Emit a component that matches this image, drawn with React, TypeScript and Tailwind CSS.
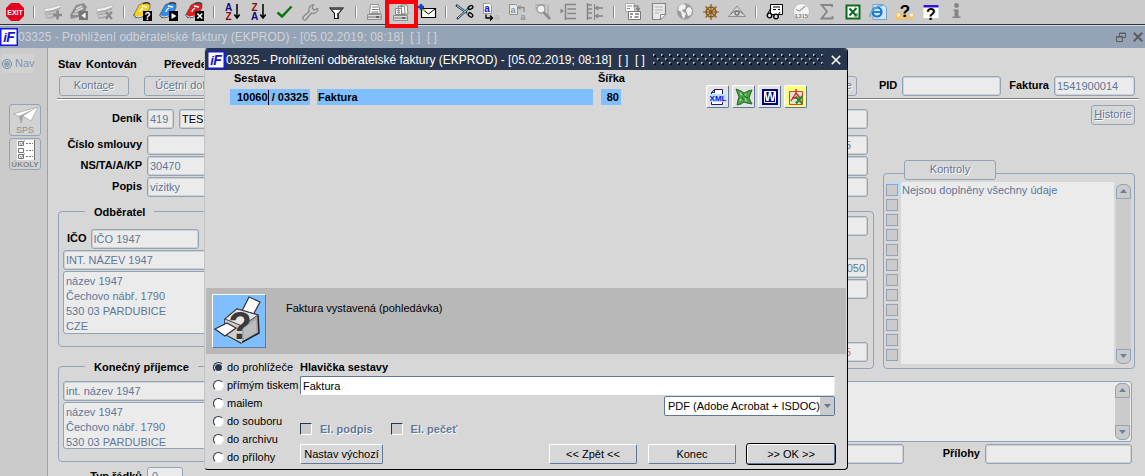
import React from "react";

type IconProps = { children: React.ReactNode };

const Ico = ({ children }: IconProps) => (
  <svg viewBox="0 0 22 22" className="block size-[22px]" fill="none" aria-hidden="true">
    {children}
  </svg>
);

const GREY = "#8f8f8f";
const NAVY = "#0a0a84";

type GlyphProps = { x: number; y: number; size: number; color: string; className?: string; children: string };
const Glyph = ({ x, y, size, color, className = "font-bold", children }: GlyphProps) => (
  <text x={x} y={y} fontSize={size} fill={color} textAnchor="middle" className={className}>
    {children}
  </text>
);

const ExitIcon = () => (
  <Ico>
    <path d="M7 2h8l5 5v8l-5 5H7l-5-5V7z" fill="#e2001e" />
    <Glyph x={11} y={13.5} size={7} color="#fff">EXIT</Glyph>
  </Ico>
);

const SheetBase = () => (
  <>
    <path d="M2 7.500c5 0 9-1 16-3.500l1 2c-6 3-11 4.500-16 4.500z" fill="#f4f4f4" stroke="#b5b5b5" strokeWidth="0.800" />
    <path d="M4 11c5 0 9-1 14-3.500M5 13.500c5 0 8-.8 12-3M5 17c4-.2 7-1 9-2" stroke="#a8a8a8" strokeWidth="1.400" />
    <path d="M3 10.500l2 7" stroke="#b5b5b5" strokeWidth="1.500" />
  </>
);
const SheetAddIcon = () => (
  <Ico>
    <SheetBase />
    <path d="M15.500 9.500v9M11 14h9" stroke="#8a8a8a" strokeWidth="2.600" />
  </Ico>
);
const SheetBackIcon = () => (
  <Ico>
    <path d="M2 14 8 4l8-2 3 4-2 5-6 5-8 2z" fill="#8f8f8f" />
    <path d="M8 8l6-3M7 11l8-4M5 13h5" stroke="#d9d9d9" strokeWidth="1.500" />
    <path d="M11 10h9v9h-9z" fill="#777" />
    <path d="M17.500 11.500v6l-4-3z" fill="#fff" />
  </Ico>
);
const SheetDeleteIcon = () => (
  <Ico>
    <SheetBase />
    <path d="M12 11l6 7M18 11l-6 7" stroke="#8a8a8a" strokeWidth="2" />
  </Ico>
);

const Binder = ({ color, children }: { color: string; children: React.ReactNode }) => (
  <Ico>
    <path d="M2 13.500 7 4l4-2 7 1v4l-5 8-7 2z" fill={color} stroke="#4b4b4b" strokeWidth="0.600" />
    <path d="M1.500 13.500l2.500 3 7-1" stroke="#555" strokeWidth="1.200" />
    <path d="M2.500 14.500l3 1.500 5-1" stroke="#fff" strokeWidth="0.800" />
    <path d="M8 11c0-2 1-3 3-4M10 5l5 1" stroke="#fff" strokeWidth="1.300" />
    <path d="M11 3c2-1.500 5-1.500 7 0" stroke="#333" strokeWidth="1.300" />
    <path d="M11 10h9v10h-9z" fill="#000" />
    {children}
  </Ico>
);
const BinderQuery = () => (
  <Binder color="#f7cf1c">
    <Glyph x={15.5} y={18.5} size={10} color="#fff">?</Glyph>
  </Binder>
);
const BinderRun = () => (
  <Binder color="#2f8cec">
    <path d="M13.500 12v6l5-3z" fill="#fff" />
  </Binder>
);
const BinderCancel = () => (
  <Binder color="#e02020">
    <path d="M13.300 12.500l5 5M18.300 12.500l-5 5" stroke="#fff" strokeWidth="1.600" />
  </Binder>
);

const SortIcon = ({ desc = false }: { desc?: boolean }) => (
  <Ico>
    <Glyph x={6.5} y={desc ? 18.5 : 10} size={10} color={NAVY}>A</Glyph>
    <Glyph x={6.5} y={desc ? 10 : 18.5} size={10} color="#8a1010">Z</Glyph>
    <path d="M15 3v14M12.300 13.500 15 17l2.700-3.500" stroke="#000" strokeWidth="1.500" />
  </Ico>
);

const CheckIcon = () => (
  <Ico>
    <path d="M3.500 11.500 8 15.500 17.500 5.500" stroke="#107010" strokeWidth="2.400" />
  </Ico>
);
const WrenchIcon = () => (
  <Ico>
    <path d="M3.500 18.500c-1-1-1-2 0-3l5.500-5c-1-3 1-6.500 4-7l.5.500-1.500 3 2 2 3.500-1.500.5.500c-.5 3.500-3.500 5-6.500 4l-5.500 6.500c-1 1-1.700 1-2.500 0z" stroke="#858585" strokeWidth="1.200" />
  </Ico>
);
const FunnelIcon = () => (
  <Ico>
    <path d="M4 7h13L12.500 12.500v5h-4v-5z" fill="#fff" stroke="#111" strokeWidth="1.100" />
    <path d="M4 6.500h13l-1.500 2.500h-10z" fill="#555" />
    <path d="M11 12h1.500v5H11z" fill="#555" />
  </Ico>
);
const PrinterIcon = () => (
  <Ico>
    <path d="M6.500 3.500h8l2 9h-11z" fill="#fff" stroke={GREY} />
    <path d="M8 6h6M8 8.500h6.500M7.500 11h7" stroke="#777" />
    <path d="M3.500 13.500h14v5h-14z" fill="#ddd" stroke={GREY} />
    <path d="M4 16h13" stroke="#777" />
    <path d="M12 15h3v2h-3z" fill="#666" />
  </Ico>
);
const PrintersIcon = () => (
  <Ico>
    <path d="M11 4h6l1 9h-6zM8.500 5.500h6l.5 8H9zM5.500 7.500h6v6h-6z" fill="#fff" stroke="#858585" />
    <path d="M7 9.500h3M7 11.500h3" stroke={GREY} />
    <path d="M3.500 14.500h14v5h-14z" fill="#ddd" stroke={GREY} />
    <path d="M4 17h13" stroke="#777" />
    <path d="M12 16h3v2h-3z" fill="#666" />
  </Ico>
);
const MailIcon = () => (
  <Ico>
    <path d="M5.500 7.500h14v9h-14z" fill="#fff" stroke="#000" strokeWidth="1.200" />
    <path d="M6 8l6.500 5 6.500-5" stroke="#000" />
    <path d="M6 9h4" stroke="#e7c32d" strokeWidth="1.500" />
    <path d="M5 3v6M2 6h6" stroke="#0747c9" strokeWidth="2.600" />
  </Ico>
);
const CutIcon = () => (
  <Ico>
    <path d="M2 4l11 8M3 18 15 7" stroke="#245" strokeWidth="2.200" />
    <path d="M3 4.700l9 6.500M4 17 14 8" stroke="#cfe7e7" strokeWidth="0.800" />
    <ellipse cx="16.500" cy="6.500" rx="2.500" ry="1.700" stroke="#111" strokeWidth="1.400" transform="rotate(-30 16.500 6.500)" />
    <ellipse cx="16.500" cy="14" rx="2.500" ry="1.700" stroke="#111" strokeWidth="1.400" transform="rotate(40 16.500 14)" />
  </Ico>
);
const CopyIcon = () => (
  <Ico>
    <path d="M3.500 2.500h6l2 2v8h-8z" fill="#fff" stroke="#999" />
    <Glyph x={7} y={11} size={10} color="#1212d8">a</Glyph>
    <path d="M6 13.500V17h6M10 14.500l2.500 2.500L10 19.500" stroke="#000" strokeWidth="1.300" />
    <Glyph x={17} y={18.5} size={9} color="#b5b5b5">a</Glyph>
  </Ico>
);
const PasteIcon = () => (
  <Ico>
    <path d="M3.500 3.500h6l2 2v8h-8z" fill="#e9e9e9" stroke={GREY} />
    <Glyph x={7} y={12} size={9} color={GREY}>a</Glyph>
    <path d="M18 11V6.500h-5M14.500 4.500 12.500 6.500l2 2" stroke={GREY} strokeWidth="1.300" />
    <Glyph x={17} y={18.5} size={9} color={GREY}>a</Glyph>
  </Ico>
);
const FindIcon = () => (
  <Ico>
    <path d="M3 4h11M3 7h4M16 4v10l2 4" stroke="#b5b5b5" strokeWidth="2" />
    <circle cx="9" cy="8" r="4" fill="#f1f1f1" stroke="#999" strokeWidth="1.300" />
    <path d="M11.500 11 18 18" stroke={GREY} strokeWidth="2.600" />
  </Ico>
);
const IndentIcon = () => (
  <Ico>
    <path d="M7 3.500h11M9.500 8h8.500M9.500 12.500h8.500M7 17.500h11M7.500 3v16" stroke="#858585" strokeWidth="1.500" />
    <path d="M2.500 7.500v5l3.500-2.500z" fill="#858585" />
  </Ico>
);
const TreeIcon = () => (
  <Ico>
    <path d="M3.500 2v17M3 4h5M3 8h5M3 12h5M3 17h5M11 7h8M11 15h8" stroke="#858585" strokeWidth="1.500" />
    <path d="M10.500 3v16M14 5l-3 2 3 2zM14 13l-3 2 3 2z" stroke="#858585" />
  </Ico>
);
const FormsIcon = () => (
  <Ico>
    <path d="M3.500 2.500h9v8h-9z" fill="#fff" stroke="#aaa" />
    <path d="M5 5h5M5 7.500h3" stroke="#888" />
    <path d="M6.500 10.500h12v8h-12z" fill="#fff" stroke="#777" />
    <path d="M8 13h3M13 13h4M8 16h2M12.500 16h4" stroke="#777" strokeWidth="1.500" />
    <path d="M11 5h5v4M14 7l2 2.500L18 7" stroke="#777" strokeWidth="1.200" />
  </Ico>
);
const NoteIcon = () => (
  <Ico>
    <path d="M4.500 2.500h13v11l-5 5h-8z" fill="#e8e8e8" stroke="#858585" strokeWidth="1.200" />
    <path d="M12.500 18v-4.500h5" fill="#fff" stroke="#858585" />
    <path d="M7 6h8M7 9h8M7 12h4" stroke="#b0b0b0" />
  </Ico>
);
const GlobeIcon = () => (
  <Ico>
    <circle cx="11" cy="10.500" r="7.800" fill="#9a9a9a" stroke="#a5a5a5" />
    <path d="M5 6c1-2 3-3 5-3l2 2-1 3-3 1 1 2 3 1-1 3-1 3-2-3-1-4-3-2zM13 7l3-1 2 3-1 5-3 1-1-3-1-2z" fill="#f1f1f1" />
  </Ico>
);
const HelmIcon = () => (
  <Ico>
    <circle cx="11" cy="11" r="4.800" stroke="#8a5a14" strokeWidth="1.800" />
    <circle cx="11" cy="11" r="1.500" fill="#8a5a14" />
    <path d="M11 3v16M3 11h16M5.500 5.500l11 11M16.500 5.500l-11 11" stroke="#8a5a14" strokeWidth="1.200" />
  </Ico>
);
const EyeIcon = () => (
  <Ico>
    <path d="M2.500 15.500 11 5l8.500 10.500z" stroke={GREY} fill="#d2d2d2" />
    <path d="M5 13c3-4 9-4 12 0" stroke="#777" />
    <circle cx="11" cy="12" r="2" stroke="#777" strokeWidth="1.300" />
  </Ico>
);
const GlassesIcon = () => (
  <Ico>
    <path d="M6.500 3.500h12v10h-12z" fill="#fff" stroke="#000" />
    <path d="M9 6h7M9 8.500h3M14 8.500h2" stroke="#000" />
    <circle cx="5.500" cy="14.500" r="2.300" fill="#d6d6d6" stroke="#000" strokeWidth="1.300" />
    <circle cx="12" cy="15.500" r="2.300" fill="#d6d6d6" stroke="#000" strokeWidth="1.300" />
    <path d="M4 12l3-5M14 14l2-3" stroke="#000" />
  </Ico>
);
const ClockIcon = () => (
  <Ico>
    <circle cx="11.500" cy="10.500" r="8" fill="#f3f3f3" stroke="#bdbdbd" />
    <path d="M6 8.500 9.500 10 15.500 5" stroke="#a0a0a0" strokeWidth="1.300" />
    <Glyph x={11.5} y={16.5} size={6} color="#808080">1315</Glyph>
  </Ico>
);
const SumIcon = () => (
  <Ico>
    <path d="M16 6V4H5.500l5.500 6.500L5.500 17.500H16.500V15" stroke="#858585" strokeWidth="1.800" />
  </Ico>
);
const ExcelIcon = () => (
  <Ico>
    <path d="M4.500 4.500h13v13h-13z" fill="#fff" stroke="#0c6b20" strokeWidth="2" />
    <path d="M7.500 7.500l6.500 7M14.500 7 7.500 14.500" stroke="#0c6b20" strokeWidth="2" />
    <path d="M12 15h3.500M15 12v3" stroke="#0c6b20" />
  </Ico>
);
const BrowserIcon = () => (
  <Ico>
    <path d="M5 3.500h10l3.500 3v12H5z" fill="#cfe4f7" stroke="#7ba3c9" />
    <circle cx="9" cy="11" r="4.500" stroke="#1b74c9" strokeWidth="2.200" />
    <path d="M5 11h9" stroke="#1b74c9" strokeWidth="1.800" />
    <path d="M1.500 16C3 9 9 4 15 4.500" stroke="#57a9e8" strokeWidth="1.400" />
  </Ico>
);
const HelpTeamIcon = () => (
  <Ico>
    <path d="M2 12h5v7H2zM8.500 13h5v6h-5zM15 12h5v7h-5z" fill="#f5c06a" />
    <circle cx="4.500" cy="14" r="1.700" fill="#fff0c8" />
    <circle cx="17.500" cy="14" r="1.700" fill="#fff0c8" />
    <Glyph x={11} y={15.5} size={17} color="#000">?</Glyph>
  </Ico>
);
const HelpWindowIcon = () => (
  <Ico>
    <path d="M3.500 4h15v13h-15z" fill="#fff" />
    <path d="M3.500 4h15v2.500h-15z" fill="#3512e0" />
    <Glyph x={11} y={18.5} size={16} color="#000">?</Glyph>
  </Ico>
);
const InfoIcon = () => (
  <Ico>
    <circle cx="10.500" cy="4.500" r="2.400" fill="#858585" />
    <path d="M7.500 8.500h5v7h2V17H6.500v-1.500h2V10h-1z" fill="#858585" />
  </Ico>
);

type Tool = { name: string; icon: React.ReactNode; highlight?: boolean };
const toolGroups: Tool[][] = [
  [{ name: "Konec", icon: <ExitIcon /> }],
  [
    { name: "Nový", icon: <SheetAddIcon /> },
    { name: "Zpět", icon: <SheetBackIcon /> },
    { name: "Smazat", icon: <SheetDeleteIcon /> },
  ],
  [
    { name: "Dotaz", icon: <BinderQuery /> },
    { name: "Provést dotaz", icon: <BinderRun /> },
    { name: "Zrušit dotaz", icon: <BinderCancel /> },
  ],
  [
    { name: "Seřadit vzestupně", icon: <SortIcon /> },
    { name: "Seřadit sestupně", icon: <SortIcon desc /> },
    { name: "Potvrdit", icon: <CheckIcon /> },
    { name: "Nástroje", icon: <WrenchIcon /> },
    { name: "Filtr", icon: <FunnelIcon /> },
  ],
  [
    { name: "Tisk", icon: <PrinterIcon /> },
    { name: "Tisk sestav", icon: <PrintersIcon />, highlight: true },
    { name: "Pošta", icon: <MailIcon /> },
  ],
  [
    { name: "Vyjmout", icon: <CutIcon /> },
    { name: "Kopírovat", icon: <CopyIcon /> },
    { name: "Vložit", icon: <PasteIcon /> },
    { name: "Hledat", icon: <FindIcon /> },
    { name: "Odsadit", icon: <IndentIcon /> },
    { name: "Strom", icon: <TreeIcon /> },
  ],
  [
    { name: "Formuláře", icon: <FormsIcon /> },
    { name: "Poznámka", icon: <NoteIcon /> },
    { name: "Web", icon: <GlobeIcon /> },
    { name: "Navigace", icon: <HelmIcon /> },
    { name: "Náhled", icon: <EyeIcon /> },
  ],
  [
    { name: "Zobrazit", icon: <GlassesIcon /> },
    { name: "Čas", icon: <ClockIcon /> },
    { name: "Součet", icon: <SumIcon /> },
    { name: "Excel", icon: <ExcelIcon /> },
    { name: "Prohlížeč", icon: <BrowserIcon /> },
    { name: "Podpora", icon: <HelpTeamIcon /> },
    { name: "Nápověda", icon: <HelpWindowIcon /> },
    { name: "Informace", icon: <InfoIcon /> },
  ],
];

const Toolbar = () => (
  <header className="flex h-[25px] shrink-0 items-start border-b border-[#28364d] bg-[#cbcbcb] pl-0.5">
    {toolGroups.map((group, i) => (
      <React.Fragment key={i}>
        {i > 0 && (
          <span className="flex h-6 w-3 items-center justify-center">
            <span className="h-3 w-0.5 border-r border-white bg-[#7b8ca6]" />
          </span>
        )}
        {group.map((tool) => (
          <button key={tool.name} aria-label={tool.name} className="relative flex h-6 w-[26px] items-center justify-center">
            {tool.icon}
            {tool.highlight && <span className="absolute -left-[3px] top-0 z-20 h-7 w-[33px] border-4 border-[#fb0007]" />}
          </button>
        ))}
      </React.Fragment>
    ))}
  </header>
);

const Logo = () => (
  <svg viewBox="0 0 18 18" className="size-[18px] shrink-0" aria-hidden="true">
    <path d="M0 0h18v18H0z" fill="#1717e6" />
    <path d="M1.500 1.500h15v15h-15z" fill="#fff" />
    <Glyph x={5} y={14} size={13} color="#1414c8" className="font-bold italic">i</Glyph>
    <Glyph x={10.5} y={14} size={14} color="#1414c8" className="font-bold italic">F</Glyph>
  </svg>
);

const Field = ({ label, value = "", className = "" }: { label: string; value?: string; className?: string }) => (
  <input
    aria-label={label}
    readOnly
    defaultValue={value}
    className={`h-5 min-w-0 rounded-[3px] border border-[#95a3b7] px-0.5 shadow-[inset_0_0_0_1px_#d0d0d0] outline-none ${className}`}
  />
);
const DIM = "bg-[#ebebeb] text-[#5f7799]";

const LabelledRow = ({ label, children }: { label: string; children: React.ReactNode }) => (
  <div className="flex items-center gap-[5px]">
    <span className="w-[84px] shrink-0 text-right font-bold">{label}</span>
    {children}
  </div>
);

const DimButton = ({ children, className }: { children: React.ReactNode; className: string }) => (
  <button className={`h-5 whitespace-nowrap rounded-[3px] border border-[#95a3b7] bg-[#d7d7d7] text-[#5f7799] [text-shadow:1px_1px_0_#fff] ${className}`}>
    {children}
  </button>
);

const Party = ({ title, children, className }: { title: string; children: React.ReactNode; className: string }) => (
  <fieldset className={`flex min-w-0 flex-col rounded-[4px] border border-[#95a3b7] px-1 pb-3 ${className}`}>
    <legend className="ml-[22px] h-4 px-[9px] font-bold leading-4">{title}</legend>
    {children}
  </fieldset>
);

const ScrollArrow = ({ down = false, round }: { down?: boolean; round: string }) => (
  <button
    aria-label={down ? "Posunout dolů" : "Posunout nahoru"}
    className={`flex h-[15px] items-center justify-center border border-[#95a3b7] bg-[#cbcbcb] ${round}`}
  >
    <svg viewBox="0 0 7 4" className="h-1 w-[7px]" aria-hidden="true">
      <path d={down ? "M0 0h7L3.500 4z" : "M0 4h7L3.500 0z"} fill="#6a80a3" />
    </svg>
  </button>
);

const ScrollBar = () => (
  <div className="flex w-[15px] shrink-0 flex-col justify-between rounded-[6px] bg-[#cbcbcb]">
    <ScrollArrow round="rounded-t-[6px]" />
    <ScrollArrow down round="rounded-b-[6px]" />
  </div>
);

const SideBar = () => (
  <aside className="flex w-12 shrink-0 flex-col border-r border-[#95a3b7] bg-[#cbcbcb] pt-1.5">
    <button className="ml-0.5 flex h-[19px] w-8 items-center gap-[3px] whitespace-nowrap bg-[#d2d2d2] text-[#8495b0]">
      <span className="size-[10px] shrink-0 rounded-full border border-[#7b8ca6] bg-[#95a3b7] shadow-[inset_0_0_0_1px_#d7d7d7]" />
      Nav
    </button>
    <div className="mt-[31px] flex flex-col gap-0.5 pl-[9px]">
      <button className="flex h-8 w-8 flex-col items-center rounded-[3px] border border-[#95a3b7] bg-[#d2d2d2] text-[#8d8d8d]">
        <svg viewBox="0 0 28 20" className="h-5 w-7 shrink-0" aria-hidden="true">
          <path d="M2 9 27 2 20 16 12 11 10 18 8 11z" fill="#fff" stroke="#aaa" strokeWidth="0.800" />
          <path d="M8 11 27 2 12 11l-2 7z" fill="#a3a3a3" />
        </svg>
        <span className="text-[9px] leading-[10px]">SPS</span>
      </button>
      <button className="flex h-8 w-8 flex-col items-center rounded-[3px] border border-[#95a3b7] bg-[#d2d2d2] text-[#858585]">
        <svg viewBox="0 0 28 21" className="h-[21px] w-7 shrink-0" fill="none" stroke="#777" aria-hidden="true">
          <path d="M6 1h17v20H6z" fill="#fff" stroke="none" />
          <path d="M7.500 2.500h5v4h-5zM7.500 9.500h5v4h-5zM7.500 15.500h5v4h-5zM23.500 1v20M8.500 4l2 1.500 3-4M8.500 17l2 1.500 3-4" />
          <path d="M15 4.500h7M15 11.500h7M15 17.500h7" strokeDasharray="2 1" />
        </svg>
        <span className="text-[8px] font-bold leading-[9px]">ÚKOLY</span>
      </button>
    </div>
  </aside>
);

const address = "název 1947\nČechovo nábř. 1790\n530 03 PARDUBICE\nCZE";

const LeftForm = () => (
  <div className="flex w-[392px] shrink-0 flex-col pt-[9px]">
    <LabelledRow label="Deník">
      <Field label="Deník" value="419" className={`w-[27px] ${DIM}`} />
      <Field label="Název deníku" value="TEST" className="w-52 bg-[#ebebeb] text-black" />
    </LabelledRow>
    <div className="mt-1.5 flex flex-col gap-px">
      <LabelledRow label="Číslo smlouvy">
        <Field label="Číslo smlouvy" className={`flex-1 ${DIM}`} />
      </LabelledRow>
      <LabelledRow label="NS/TA/A/KP">
        <Field label="NS/TA/A/KP" value="30470" className={`flex-1 ${DIM}`} />
      </LabelledRow>
      <LabelledRow label="Popis">
        <Field label="Popis" value="vizitky" className={`flex-1 ${DIM}`} />
      </LabelledRow>
    </div>
    <Party title="Odběratel" className="mt-[7px] gap-px">
      <label className="mt-[9px] flex items-center gap-1 pl-1 font-bold">
        IČO
        <Field label="IČO" value="IČO 1947" className={`w-[108px] font-normal ${DIM}`} />
      </label>
      <Field label="Název odběratele" value="INT. NÁZEV 1947" className={DIM} />
      <textarea
        aria-label="Adresa odběratele"
        readOnly
        defaultValue={address}
        className={`h-[63px] resize-none overflow-hidden rounded-[3px] border border-[#95a3b7] px-0.5 pt-0.5 leading-[15px] outline-none ${DIM}`}
      />
    </Party>
    <Party title="Konečný příjemce" className="mt-3 gap-px">
      <Field label="Název příjemce" value="int. název 1947" className={`mt-1.5 ${DIM}`} />
      <textarea
        aria-label="Adresa příjemce"
        readOnly
        defaultValue={address}
        className={`h-[47px] resize-none overflow-hidden rounded-[3px] border border-[#95a3b7] px-0.5 pt-0.5 leading-[15px] outline-none ${DIM}`}
      />
    </Party>
    <div className="mt-[5px] flex">
      <LabelledRow label="Typ řádků">
        <select aria-label="Typ řádků" className={`h-5 w-9 appearance-none rounded-[3px] border border-[#95a3b7] px-1 ${DIM}`}>
          <option>0</option>
        </select>
      </LabelledRow>
    </div>
  </div>
);

const MiddleForm = () => (
  <div className="flex min-w-0 flex-1 flex-col pt-[9px]">
    <div className="flex flex-col pr-[6px]">
      <Field label="Středisko" className={DIM} />
      <div className="mt-1.5 flex flex-col gap-px">
        <Field label="Smlouva" value="5" className={`pr-4 text-right ${DIM}`} />
        <Field label="Akce" className={DIM} />
        <Field label="Text" className={DIM} />
      </div>
    </div>
    <div className="mt-[14px] flex flex-1 flex-col rounded-[4px] border border-[#95a3b7] py-1 pr-[5px]">
      <Field label="Datum" className={DIM} />
      <Field label="Částka" value="050" className={`mt-[22px] text-right ${DIM}`} />
      <Field label="Kurz" className={`mt-px ${DIM}`} />
      <Field label="Zbývá" value="5" className="mt-[43px] bg-[#ebebeb] pr-4 text-right text-[#c07a5a]" />
    </div>
  </div>
);

const Checks = () => (
  <div className="ml-[9px] flex w-[252px] shrink-0 flex-col pt-[5px]">
    <DimButton className="w-11 self-end">
      <span className="underline">H</span>istorie
    </DimButton>
    <DimButton className="z-10 -mb-[7px] ml-[21px] mt-[35px] w-[92px]">Kontroly</DimButton>
    <div className="flex h-[196px] rounded-[4px] border border-[#95a3b7] pb-1 pl-0.5 pr-[3px] pt-2">
      <div className="flex w-[15px] flex-col justify-between bg-gradient-to-b from-[#b9dcfb] from-[14px] to-transparent to-[14px] py-0.5">
        {Array.from({ length: 12 }, (_, i) => (
          <input
            key={i}
            type="checkbox"
            aria-label={`Kontrola ${i + 1}`}
            className="size-3 shrink-0 appearance-none border border-[#95a3b7] bg-[#cbcbcb]"
          />
        ))}
      </div>
      <div className="mr-0.5 flex-1 whitespace-nowrap bg-[#ebebeb] pl-px leading-4 text-[#5f7799]">Nejsou doplněny všechny údaje</div>
      <div className="flex pt-0.5">
        <ScrollBar />
      </div>
    </div>
  </div>
);

const InvoiceForm = () => (
  <main className="flex min-w-0 flex-1 flex-col overflow-hidden">
    <div className="mt-2 flex h-5 items-center pl-2.5 font-bold">
      <span className="w-[28px]">Stav</span>
      <span className="w-[78px]">Kontován</span>
      <span>Převedeno</span>
    </div>
    <div className="mt-[3px] flex items-center pl-[11px] pr-2.5">
      <DimButton className="w-[70px]">
        Konta<span className="underline">c</span>e
      </DimButton>
      <DimButton className="ml-[15px] w-[90px]">
        Úč<span className="underline">e</span>tní doklad
      </DimButton>
      <span className="flex-1" />
      <DimButton className="w-[84px] px-1 text-right">Kopie</DimButton>
      <label className="ml-[22px] flex items-center gap-[5px] font-bold">
        PID
        <Field label="PID" className={`w-[99px] font-normal ${DIM}`} />
      </label>
      <label className="ml-2 flex items-center gap-[5px] font-bold">
        Faktura
        <Field label="Faktura" value="1541900014" className={`w-[81px] font-normal ${DIM}`} />
      </label>
    </div>
    <hr className="ml-[9px] mr-1.5 mt-0.5 h-0.5 border-b border-t border-b-white border-t-[#808080]" />
    <div className="flex pl-2.5 pr-2.5">
      <LeftForm />
      <div className="flex min-w-0 flex-1 flex-col">
        <div className="flex">
          <MiddleForm />
          <Checks />
        </div>
        <div className="mr-[3px] mt-3 flex h-[61px] rounded-[3px] border border-[#95a3b7] bg-[#ebebeb] p-px">
          <textarea aria-label="Poznámka k faktuře" readOnly className="min-w-0 flex-1 resize-none outline-none" />
          <ScrollBar />
        </div>
        <div className="mr-[3px] mt-0.5 flex items-center">
          <Field label="Dokument" className={`flex-1 ${DIM}`} />
          <label className="ml-[39px] flex items-center gap-[5px] font-bold">
            Přílohy
            <Field label="Přílohy" className={`w-[147px] ${DIM}`} />
          </label>
        </div>
      </div>
    </div>
  </main>
);

const targets = ["do prohlížeče", "přímým tiskem", "mailem", "do souboru", "do archivu", "do přílohy"];

const RaisedButton = ({ children, className }: { children: React.ReactNode; className: string }) => (
  <button
    className={`h-5 whitespace-nowrap rounded-[2px] border border-b-[#5f7799] border-l-white border-r-[#5f7799] border-t-white bg-[#d7d7d7] text-black ${className}`}
  >
    {children}
  </button>
);

const ExportButton = ({ label, className, children }: { label: string; className: string; children: React.ReactNode }) => (
  <button
    aria-label={label}
    className={`flex h-[23px] w-[23px] items-center justify-center rounded-[2px] border border-b-[#5f7799] border-l-white border-r-[#5f7799] border-t-white ${className}`}
  >
    <svg viewBox="0 0 18 18" className="size-[18px]" fill="none" aria-hidden="true">
      {children}
    </svg>
  </button>
);

const BigPrinter = () => (
  <svg viewBox="0 0 52 52" className="size-[52px]" fill="none" aria-hidden="true">
    <path d="M28 18 36 2l11 5-8 15z" fill="#fff" stroke="#333" strokeWidth="1.200" />
    <path d="M12 24 24 14l21 6 1 18-18 10-16-9z" fill="#a8a8a8" stroke="#222" strokeWidth="1.500" />
    <path d="M12 24 29 31v17l-17-9z" fill="#cfcfcf" />
    <path d="M12 24 24 14l21 6-16 11z" fill="#e6e6e6" stroke="#444" />
    <path d="M31 33l12-8v12l-12 8z" fill="#bdbdbd" />
    <path d="M2 34 14 28 23 33 12 41z" fill="#fff" stroke="#333" strokeWidth="1.300" />
    <Glyph x={27} y={44} size={38} color="#3a3a3a">?</Glyph>
  </svg>
);

const ReportDialog = () => (
  <section
    role="dialog"
    aria-label="Tisk sestavy"
    className="absolute left-[204px] top-12 z-10 w-[644px] rounded-[4px] border border-b-black border-l-[#c4c4c4] border-r-black border-t-[#28364d] bg-[#d7d7d7] pb-[3px]"
  >
    <div className="flex h-[21px] items-center rounded-t-[3px] bg-[#28364d] pl-0.5 pr-1.5 text-[12px] text-white">
      <Logo />
      <h2 className="ml-px whitespace-pre">03325 - Prohlížení odběratelské faktury (EKPROD) - [05.02.2019; 08:18]  [ ]  [ ]</h2>
      <svg className="ml-2 mr-2 h-[11px] min-w-0 flex-1" aria-hidden="true">
        <defs>
          <pattern id="grip" width="8" height="8" patternUnits="userSpaceOnUse">
            <path d="M0 0h2v1H1v1H0zM4 4h2v1H5v1H4z" fill="#a9b4c4" />
            <path d="M1 2h1V1h1v2H1zM5 6h1V5h1v2H5z" fill="#000" />
          </pattern>
        </defs>
        <rect width="100%" height="11" fill="url(#grip)" />
      </svg>
      <button aria-label="Zavřít">
        <svg viewBox="0 0 10 10" className="size-2.5" aria-hidden="true">
          <path d="M.8.8l8.400 8.400M9.200.8.800 9.200" stroke="#fff" strokeWidth="1.600" />
        </svg>
      </button>
    </div>

    <div className="flex h-[218px] items-start pl-[25px] text-black">
      <div className="w-[87px]">
        <div className="h-[19px] pl-1 font-bold leading-4">Sestava</div>
        <div className="flex h-4 w-20 items-center bg-[#80bfff] pl-[7px] font-bold">
          10060<span className="h-[15px] w-px bg-black" />&nbsp;/ 03325
        </div>
      </div>
      <div className="mt-[19px] h-4 w-[276px] bg-[#80bfff] pl-px font-bold leading-4">Faktura</div>
      <div className="ml-[5px]">
        <div className="h-[19px] font-bold leading-4">Šířka</div>
        <div className="ml-[3px] h-4 w-5 bg-[#80bfff] pr-0.5 text-right font-bold leading-4">80</div>
      </div>
      <div className="ml-auto mr-10 mt-[15px] flex gap-[3px]">
        <ExportButton label="XML" className="bg-[#e4e4e4]">
          <path d="M2.500 16.500V4.500l3-3h8v15zM2.500 4.500h3v-3" fill="#fff" stroke="#1c1c6c" />
          <path d="M1 6h16v8H1z" fill="#b9dcff" />
          <Glyph x={9} y={13} size={8} color="#1414e0">XML</Glyph>
        </ExportButton>
        <ExportButton label="Excel" className="bg-[#e4e4e4]">
          <path d="M1 1l5 2 3 2 4-2 4-1-2 5-1 3 3 6-5-1-3-1-3 2-4 1 1-5 1-3z" fill="#4aa04a" stroke="#236b23" />
          <path d="M5 5l2 2M11 6l-2 2M6 11l-1 2M11 11l-1-1M12 13l-2-1" stroke="#b6e0a8" strokeWidth="1.300" />
          <path d="M8 5l2 4 3 1M7 9l2 3" stroke="#236b23" />
        </ExportButton>
        <ExportButton label="Word" className="bg-[#e4e4e4]">
          <path d="M1 1h16v16H1z" fill="#000080" />
          <path d="M3.500 3.500h11v11h-11z" stroke="#fff" />
          <Glyph x={9} y={13} size={12} color="#fff">W</Glyph>
        </ExportButton>
        <ExportButton label="PDF a Excel" className="bg-[#ffff80]">
          <path d="M2.500 3.500h13v13h-13z" fill="#e3e0d5" stroke="#d2452c" />
          <path d="M9 1v4L4 13M9 5l4 5M5 10h6" stroke="#d22020" strokeWidth="1.300" />
          <path d="M8.500 8.500l7 7M15.500 8 9 15.500" stroke="#278a2c" strokeWidth="2.300" />
        </ExportButton>
      </div>
    </div>

    <div className="mx-px flex h-[66px] items-center bg-[#b8b8b8] pl-1.5">
      <span className="flex size-[54px] items-center justify-center border border-b-[#5f7799] border-l-white border-r-[#5f7799] border-t-white bg-[#80bfff]">
        <BigPrinter />
      </span>
      <p className="mb-[26px] ml-5 text-black">Faktura vystavená (pohledávka)</p>
    </div>

    <div className="flex pl-2 pr-3 pt-1 text-black">
      <div className="w-[87px] shrink-0">
        {targets.map((t, i) => (
          <label key={t} className="flex h-[18px] items-center gap-[3px] whitespace-nowrap">
            <input
              type="radio"
              name="target"
              defaultChecked={i === 0}
              className="size-[11px] shrink-0 appearance-none rounded-full border border-b-[#ececec] border-l-[#28364d] border-r-[#ececec] border-t-[#28364d] bg-white checked:bg-[#28364d] checked:shadow-[inset_0_0_0_1px_#fff]"
            />
            {t}
          </label>
        ))}
      </div>
      <div className="flex min-w-0 flex-1 flex-col">
        <label htmlFor="report-title" className="h-[18px] font-bold leading-[18px]">
          Hlavička sestavy
        </label>
        <input
          id="report-title"
          defaultValue="Faktura"
          className="h-[19px] w-full rounded-[2px] border border-b-white border-l-[#5f7799] border-r-[#ececec] border-t-[#5f7799] bg-white px-0.5 outline-none"
        />
        <div className="relative mt-px w-[171px] self-end">
          <select
            aria-label="Formát"
            className="h-5 w-full appearance-none rounded-[2px] border border-[#5f7799] bg-white pl-[3px] outline-none"
          >
            <option>PDF (Adobe Acrobat + ISDOC)</option>
          </select>
          <span className="pointer-events-none absolute right-px top-px flex h-[18px] w-[14px] items-center justify-center bg-[#cbcbcb]">
            <svg viewBox="0 0 7 4" className="h-1 w-[7px]" aria-hidden="true">
              <path d="M0 0h7L3.500 4z" fill="#5f7799" />
            </svg>
          </span>
        </div>
        <div className="mt-[5px] flex h-4 gap-[18px] font-bold text-[#5f7799] [text-shadow:1px_1px_0_#fff]">
          {["El. podpis", "El. pečeť"].map((t) => (
            <label key={t} className="flex items-center gap-2">
              <input
                type="checkbox"
                className="size-3 appearance-none border border-b-white border-l-[#28364d] border-r-white border-t-[#28364d] bg-[#cbcbcb]"
              />
              {t}
            </label>
          ))}
        </div>
        <div className="mt-[7px] flex gap-[11px]">
          <RaisedButton className="mr-auto w-[83px]">Nastav výchozí</RaisedButton>
          <RaisedButton className="w-[88px]">&lt;&lt; Zpět &lt;&lt;</RaisedButton>
          <RaisedButton className="w-[88px]">Konec</RaisedButton>
          <RaisedButton className="w-[88px] outline outline-black">&gt;&gt; OK &gt;&gt;</RaisedButton>
        </div>
      </div>
    </div>
  </section>
);

export default function App() {
  return (
    <div className="relative flex h-screen flex-col overflow-hidden bg-[#d7d7d7] font-['Liberation_Sans',Arial,sans-serif] text-[11px] text-black">
      <Toolbar />
      <div className="mt-px flex h-[22px] shrink-0 items-center bg-[#95a3b7] pr-0.5 text-[12px] text-[#cfd3d9]">
        <Logo />
        <h1 className="whitespace-pre">03325 - Prohlížení odběratelské faktury (EKPROD) - [05.02.2019; 08:18]  [ ]  [ ]</h1>
        <span className="flex-1" />
        <button aria-label="Obnovit okno">
          <svg viewBox="0 0 10 10" className="size-2.5" fill="none" stroke="#5d5d5d" aria-hidden="true">
            <path d="M3.500 5V1h6v4.500H7M3 1.500h7M.5 4.500h6v5h-6zM0 5h7" />
          </svg>
        </button>
        <button aria-label="Zavřít okno" className="ml-[7px]">
          <svg viewBox="0 0 10 10" className="size-2.5" aria-hidden="true">
            <path d="M.8.8l8.400 8.400M9.200.8.800 9.200" stroke="#5d5d5d" strokeWidth="2" />
          </svg>
        </button>
      </div>
      <div className="flex min-h-0 flex-1">
        <SideBar />
        <InvoiceForm />
      </div>
      <ReportDialog />
    </div>
  );
}
